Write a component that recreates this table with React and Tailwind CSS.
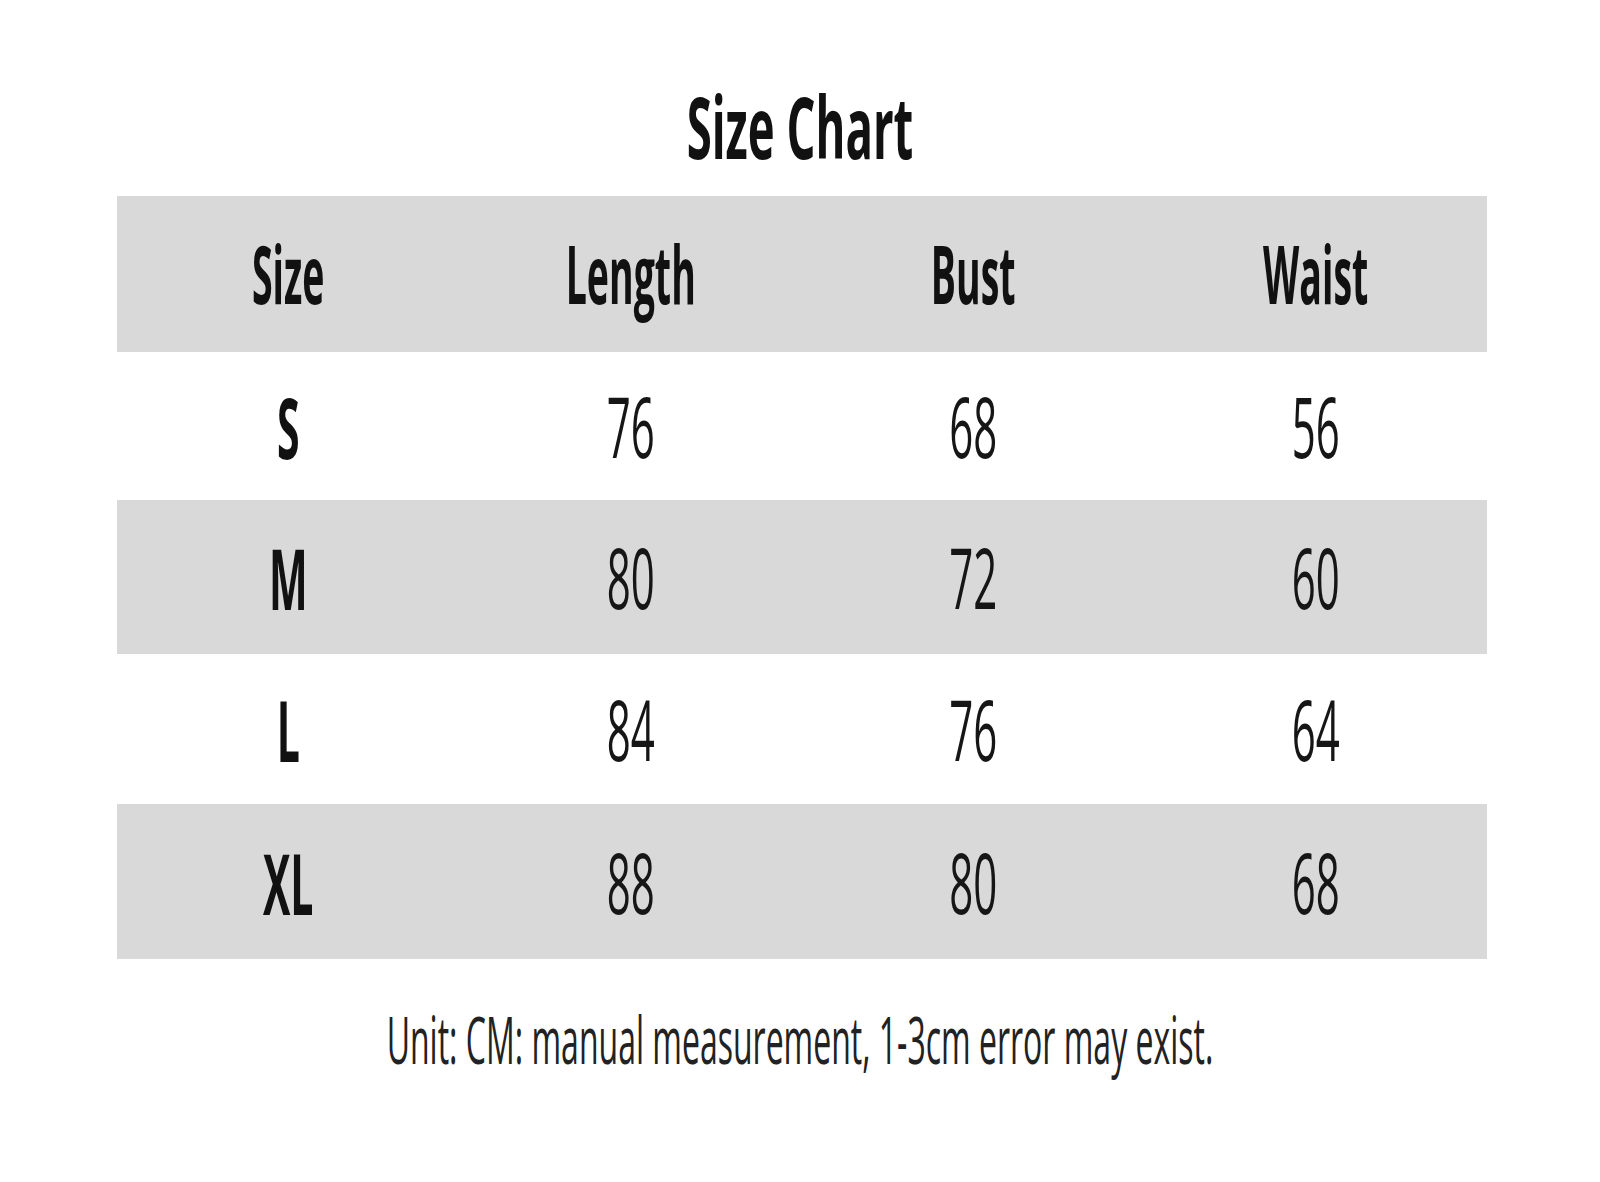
const rows = [
  { size: 'S', length: '76', bust: '68', waist: '56', gray: false, h: 'h-[148px]' },
  { size: 'M', length: '80', bust: '72', waist: '60', gray: true, h: 'h-[154px]' },
  { size: 'L', length: '84', bust: '76', waist: '64', gray: false, h: 'h-[150px]' },
  { size: 'XL', length: '88', bust: '80', waist: '68', gray: true, h: 'h-[155px]' },
];

const font = { fontFamily: '"Open Sans", "Noto Sans", sans-serif' };

const Cell = ({ children, bold }) => (
  <div className='flex items-center justify-center'>
    {bold ? (
      <span className='inline-block text-[41px] leading-[40px] font-bold text-[#111] scale-y-[2.05]'>{children}</span>
    ) : (
      <span className='inline-block text-[42px] leading-[40px] font-normal text-[#161616] scale-y-[2.0]'>{children}</span>
    )}
  </div>
);

export default function App() {
  return (
    <div className='w-[1600px] h-[1182px] bg-white overflow-hidden' style={font}>
      {/* title */}
      <div className='h-[196px] pt-[95px] flex justify-center'>
        <span className='inline-block h-[60px] text-[45.5px] leading-[60px] font-bold text-[#111] scale-y-[1.9]'>
          Size Chart
        </span>
      </div>

      {/* table */}
      <div className='ml-[117px] w-[1370px]'>
        <div className='grid grid-cols-4 h-[156px] bg-[#d9d9d9]'>
          {['Size', 'Length', 'Bust', 'Waist'].map((t) => (
            <div key={t} className='flex items-center justify-center'>
              <span className='inline-block text-[37.5px] leading-[40px] font-bold text-[#111] scale-y-[2.15]'>{t}</span>
            </div>
          ))}
        </div>
        {rows.map((r) => (
          <div key={r.size} className={`grid grid-cols-4 ${r.h} ${r.gray ? 'bg-[#d9d9d9]' : 'bg-white'}`}>
            <Cell bold>{r.size}</Cell>
            <Cell>{r.length}</Cell>
            <Cell>{r.bust}</Cell>
            <Cell>{r.waist}</Cell>
          </div>
        ))}
      </div>

      {/* footnote */}
      <div className='mt-[55px] flex justify-center'>
        <span className='inline-block h-[50px] text-[32px] leading-[50px] text-[#222] scale-y-[2.05]'>
          Unit: CM: manual measurement, 1-3cm error may exist.
        </span>
      </div>
    </div>
  );
}
